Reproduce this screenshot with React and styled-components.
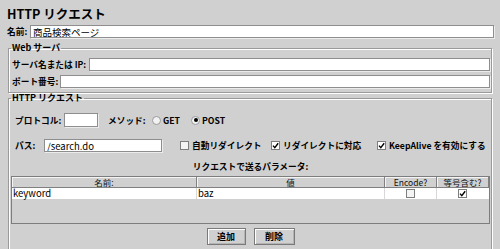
import React from "react";
import styled, { createGlobalStyle } from "styled-components";

const GlobalStyle = createGlobalStyle`
  html, body { margin: 0; padding: 0; background: #d0d0d0; }
  body {
    font-family: "Noto Sans CJK JP", "Liberation Sans", sans-serif;
    font-size: 9px;
    color: #000;
  }
  #root { width: 500px; height: 249px; overflow: hidden; }
  * { box-sizing: border-box; }
`;

const Page = styled.div`
  display: flex;
  flex-direction: column;
  padding: 6px 6px 0 7px;
  height: 249px;
  overflow: hidden;
`;

const Title = styled.h1`
  margin: 0;
  height: 16px;
  font-size: 12.5px;
  font-weight: 700;
  line-height: 16px;
  white-space: nowrap;
`;

const Row = styled.div`
  display: flex;
  align-items: center;
  height: ${(p) => p.$h || 13}px;
  margin-top: ${(p) => p.$mt || 0}px;
  padding-left: ${(p) => p.$pl || 0}px;
`;

const Label = styled.label`
  flex: none;
  width: ${(p) => p.$w}px;
  margin-left: ${(p) => p.$ml || 0}px;
  font-size: 8.7px;
  font-weight: 700;
  line-height: 11px;
  white-space: nowrap;
`;

const TextInput = styled.input`
  flex: ${(p) => (p.$w ? "none" : "1 1 auto")};
  width: ${(p) => (p.$w ? `${p.$w}px` : "auto")};
  min-width: 0;
  height: ${(p) => p.$h || 13}px;
  margin: 0;
  padding: 0 2px;
  border: 1px solid #8e8e8e;
  box-shadow: 1px 1px 0 #ececec;
  background: #fff;
  color: #000;
  font: 400 9.5px "Noto Sans CJK JP", "Liberation Sans", sans-serif;
  outline: none;
`;

const Group = styled.fieldset`
  min-width: 0;
  margin: ${(p) => p.$mt || 0}px 2px 0 1px;
  padding: ${(p) => p.$pt}px 1px ${(p) => p.$pb}px 2px;
  border: 1px solid #9a9a9a;
  box-shadow: inset 1px 1px 0 #fff, 1px 1px 0 #fff;
  display: flex;
  flex-direction: column;
  flex: ${(p) => (p.$grow ? "1 0 auto" : "none")};
`;

const Legend = styled.legend`
  padding: 0 1px;
  height: 10px;
  font-size: 9px;
  font-weight: 700;
  line-height: 10px;
  white-space: nowrap;
`;

const RadioItem = styled.span`
  flex: none;
  display: flex;
  align-items: center;
  width: ${(p) => (p.$w ? `${p.$w}px` : "auto")};
  margin-left: ${(p) => p.$ml || 0}px;
  font-size: 8.7px;
  font-weight: 700;
  line-height: 11px;
  white-space: nowrap;
`;

const RadioDot = styled.span`
  position: relative;
  flex: none;
  width: 9px;
  height: 9px;
  margin-right: 2px;
  border: 1px solid #9a9a9a;
  border-radius: 50%;
  background: #f2f2f2;
  &::after {
    content: "";
    display: ${(p) => (p.$on ? "block" : "none")};
    position: absolute;
    left: 1.5px;
    top: 1.5px;
    width: 4px;
    height: 4px;
    border-radius: 50%;
    background: #000;
  }
`;

const CheckItem = styled.span`
  flex: ${(p) => (p.$w ? "none" : "1 1 auto")};
  display: flex;
  align-items: center;
  width: ${(p) => (p.$w ? `${p.$w}px` : "auto")};
  margin-left: ${(p) => p.$ml || 0}px;
  font-size: 8.7px;
  font-weight: 700;
  line-height: 11px;
  white-space: nowrap;
`;

const Box = styled.span`
  flex: none;
  display: inline-flex;
  align-items: center;
  justify-content: center;
  width: 9px;
  height: 9px;
  margin-right: ${(p) => p.$mr || 0}px;
  border: 1px solid #7e7e7e;
  background: ${(p) => (p.$on ? "#fff" : "#f4f4f4")};
`;

const Check = ({ on, mr }) => (
  <Box $on={on} $mr={mr}>
    {on && (
      <svg width="7" height="7" viewBox="0 0 7 7">
        <path d="M1 3.6 L2.8 5.6 L6.2 1.2" fill="none" stroke="#000" strokeWidth="1.4" />
      </svg>
    )}
  </Box>
);

const Caption = styled.div`
  margin-top: 9px;
  height: 11px;
  font-size: 8.7px;
  font-weight: 700;
  line-height: 11px;
  text-align: center;
`;

const Table = styled.div`
  margin-top: 4px;
  height: 48px;
  border: 1px solid #7d7d7d;
  background: #d0d0d0;
  display: grid;
  grid-template-columns: 185px 188px 52px 1fr;
  grid-auto-rows: 11px;
  align-content: start;
`;

const HeadCell = styled.div`
  border-right: 1px solid #808080;
  border-bottom: 1px solid #808080;
  box-shadow: inset 1px 1px 0 #f4f4f4;
  background: #d0d0d0;
  font-size: 8.5px;
  font-weight: 400;
  line-height: 10px;
  text-align: center;
  color: #111;
  white-space: nowrap;
  overflow: hidden;
  &:last-child { border-right: none; }
`;

const Cell = styled.div`
  display: flex;
  align-items: center;
  justify-content: ${(p) => (p.$center ? "center" : "flex-start")};
  padding-left: ${(p) => (p.$center ? 0 : 1)}px;
  border-right: 1px solid ${(p) => (p.$last ? "transparent" : "#d8d8d8")};
  background: #fff;
  font-size: 9.5px;
  font-weight: 400;
  line-height: 11px;
  white-space: nowrap;
`;

const Buttons = styled.div`
  display: flex;
  justify-content: center;
  gap: 8px;
  margin-top: 4px;
`;

const Button = styled.button`
  width: ${(p) => p.$w}px;
  height: 17px;
  margin: 0;
  padding: 0;
  border: 1px solid #7a7a7a;
  box-shadow: inset 1px 1px 0 #fff, inset -1px -1px 0 #b4b4b4;
  background: #d0d0d0;
  color: #000;
  font: 700 9px "Noto Sans CJK JP", "Liberation Sans", sans-serif;
  line-height: 15px;
`;

export default function App() {
  return (
    <>
      <GlobalStyle />
      <Page>
        <Title>HTTP リクエスト</Title>

        <Row $mt={3}>
          <Label $w={23}>名前:</Label>
          <TextInput readOnly value="商品検索ページ" />
        </Row>

        <Group $mt={5} $pt={5} $pb={4}>
          <Legend>Web サーバ</Legend>
          <Row $pl={1}>
            <Label $w={77}>サーバ名または IP:</Label>
            <TextInput readOnly value="" />
          </Row>
          <Row $pl={1} $mt={4}>
            <Label $w={48}>ポート番号:</Label>
            <TextInput readOnly value="" />
          </Row>
        </Group>

        <Group $pt={10} $pb={20} $grow>
          <Legend>HTTP リクエスト</Legend>
          <Row $pl={4} $h={14}>
            <Label $w={49}>プロトコル:</Label>
            <TextInput readOnly value="" $w={34} $h={14} />
            <Label $w={44} $ml={10}>メソッド:</Label>
            <RadioItem $w={39}>
              <RadioDot />
              GET
            </RadioItem>
            <RadioItem>
              <RadioDot $on />
              POST
            </RadioItem>
          </Row>

          <Row $pl={4} $mt={12}>
            <Label $w={29}>パス:</Label>
            <TextInput readOnly value="/search.do" $w={118} />
            <CheckItem $w={91} $ml={18}>
              <Check mr={3} />
              自動リダイレクト
            </CheckItem>
            <CheckItem $w={106}>
              <Check on mr={3} />
              リダイレクトに対応
            </CheckItem>
            <CheckItem>
              <Check on mr={3} />
              KeepAlive を有効にする
            </CheckItem>
          </Row>

          <Caption>リクエストで送るパラメータ:</Caption>

          <Table>
            <HeadCell>名前:</HeadCell>
            <HeadCell>値</HeadCell>
            <HeadCell>Encode?</HeadCell>
            <HeadCell>等号含む?</HeadCell>
            <Cell>keyword</Cell>
            <Cell>baz</Cell>
            <Cell $center>
              <Check />
            </Cell>
            <Cell $center $last>
              <Check on />
            </Cell>
          </Table>

          <Buttons>
            <Button $w={39}>追加</Button>
            <Button $w={41}>削除</Button>
          </Buttons>
        </Group>
      </Page>
    </>
  );
}
